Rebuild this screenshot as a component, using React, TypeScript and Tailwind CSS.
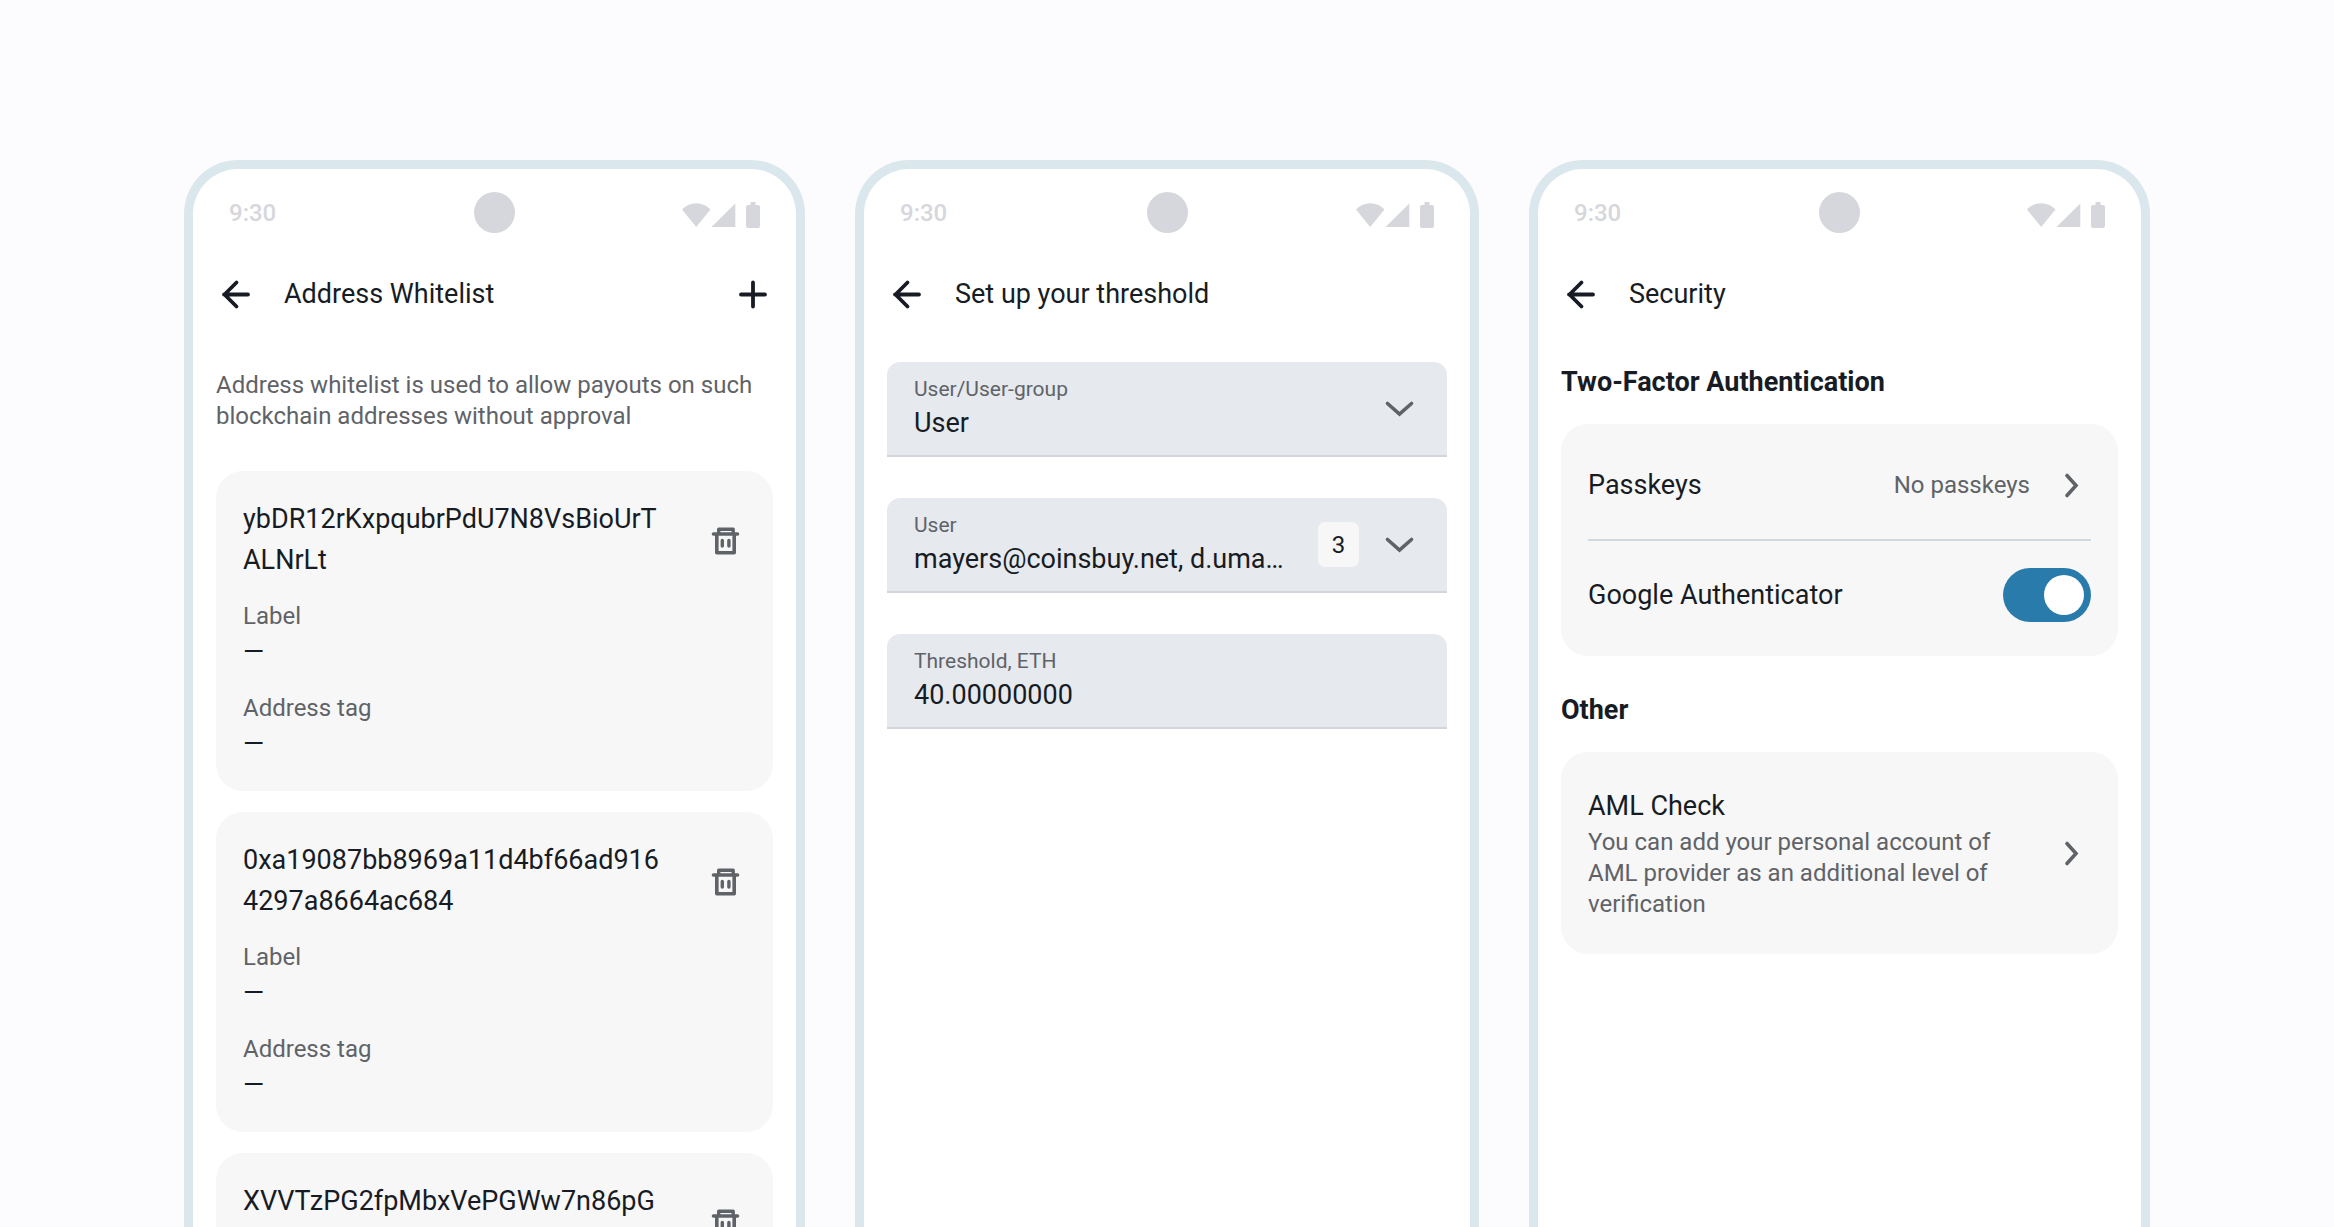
import { useState } from "react";

const addresses = [
  "ybDR12rKxpqubrPdU7N8VsBioUrTALNrLt",
  "0xa19087bb8969a11d4bf66ad9164297a8664ac684",
  "XVVTzPG2fpMbxVePGWw7n86pGWkR4tQz",
];

const StatusBar = () => (
  <div className="grid h-[87px] grid-cols-3 items-center px-[36px] text-[24px] font-medium text-[#d6d7dc]">
    <span>9:30</span>
    <span className="size-[41px] justify-self-center rounded-full bg-[#d6d7dc]" />
    <svg className="mt-1 h-[26px] w-[78px] justify-self-end" viewBox="0 0 78 26" fill="currentColor" aria-hidden="true">
      <path d="M0 7.500C8-1 20.500-1 28.500 7.500L14.200 25Z" />
      <path d="M53.300 1.500V25H29.500Z" />
      <path d="M68.500 0h5v3H76a2 2 0 0 1 2 2V24A2 2 0 0 1 76 26H66a2 2 0 0 1-2-2V5A2 2 0 0 1 66 3h2.500Z" />
    </svg>
  </div>
);

const Chevron = () => (
  <svg
    className="pointer-events-none size-[41px] shrink-0 text-[#5f6368]"
    viewBox="0 0 41 41"
    fill="none"
    stroke="currentColor"
    strokeWidth="3.6"
    strokeLinecap="round"
    aria-hidden="true"
  >
    <path d="M8.500 15.500 20.500 26 32.500 15.500" />
  </svg>
);

const ChevronRight = () => (
  <svg
    className="size-[41px] shrink-0 text-[#5f6368]"
    viewBox="0 0 41 41"
    fill="none"
    stroke="currentColor"
    strokeWidth="3.6"
    strokeLinecap="round"
    aria-hidden="true"
  >
    <path d="M17 10.500 26 20.500 17 30.500" />
  </svg>
);

const TrashIcon = () => (
  <svg className="size-[41px]" viewBox="0 0 41 41" fill="none" stroke="currentColor" aria-hidden="true">
    <path d="M8.500 14H32.500" strokeWidth="3.600" strokeLinecap="round" />
    <path d="M13.700 13V9.200H28.200V13" strokeWidth="3.400" strokeLinejoin="round" />
    <path d="M11.800 14V32.700H29.200V14" strokeWidth="3.600" strokeLinejoin="round" />
    <path d="M17.300 20.500V26M23.900 20.500V26" strokeWidth="3.400" strokeLinecap="round" />
  </svg>
);

const Phone = ({ title, canAdd, children }: { title: string; canAdd?: boolean; children: React.ReactNode }) => (
  <section className="min-w-0 overflow-hidden rounded-t-[54px] border-[9px] border-b-0 border-[#dae8ed] bg-white">
    <StatusBar />
    <header className="flex h-[76px] items-center px-[23px]">
      <button type="button" aria-label="Back" className="size-[41px]">
        <svg
          className="size-[41px]"
          viewBox="0 0 41 41"
          fill="none"
          stroke="currentColor"
          strokeWidth="3.8"
          strokeLinecap="round"
          strokeLinejoin="round"
          aria-hidden="true"
        >
          <path d="M32 20.500H8M20.500 8.500 8.500 20.500 20.500 32.500" />
        </svg>
      </button>
      <h1 className="ml-[27px] flex-1 text-[27px] leading-[41px]">{title}</h1>
      {canAdd && (
        <button type="button" aria-label="Add address" className="size-[41px]">
          <svg
            className="size-[41px]"
            viewBox="0 0 41 41"
            fill="none"
            stroke="currentColor"
            strokeWidth="3.8"
            strokeLinecap="round"
            aria-hidden="true"
          >
            <path d="M9 20.500H33M21 8.500V32.500" />
          </svg>
        </button>
      )}
    </header>
    <div className="px-[23px] pt-[30px]">{children}</div>
  </section>
);

const AddressCard = ({ address }: { address: string }) => (
  <li className="rounded-[27px] bg-[#f7f7f7] px-[27px] pb-[26px] pt-[28px]">
    <div className="flex items-center gap-[41px]">
      <p className="min-w-0 flex-1 break-all text-[27px] leading-[41px]">{address}</p>
      <button type="button" aria-label="Delete address" className="size-[41px] shrink-0 text-[#5f6368]">
        <TrashIcon />
      </button>
    </div>
    <dl>
      {["Label", "Address tag"].map((name) => (
        <div key={name} className="mt-5">
          <dt className="text-[24px] leading-[31px] text-[#5f6368]">{name}</dt>
          <dd className="text-[27px] leading-[41px]">—</dd>
        </div>
      ))}
    </dl>
  </li>
);

const fieldClass = "flex h-[95px] items-center rounded-t-[13px] border-b-2 border-[#d3d5da] bg-[#e6e9ee] px-[27px]";
const labelClass = "block text-[21px] leading-[27px] text-[#5f6368]";
const valueClass = "block w-full appearance-none truncate bg-transparent text-[27px] leading-[41px] outline-none";

export default function App() {
  const [authenticator, setAuthenticator] = useState(true);
  const [threshold, setThreshold] = useState("40.00000000");

  return (
    <main className="grid h-screen grid-cols-[621fr_624fr_621fr] gap-[50px] overflow-hidden bg-[#fcfcfe] px-[184px] pt-40 font-[Roboto,sans-serif] text-[#171c24]">
      <Phone title="Address Whitelist" canAdd>
        <p className="mb-[39px] mt-2 text-[24px] leading-[31px] text-[#5f6368]">
          Address whitelist is used to allow payouts on such blockchain addresses without approval
        </p>
        <ul className="flex flex-col gap-[21px]">
          {addresses.map((address) => (
            <AddressCard key={address} address={address} />
          ))}
        </ul>
      </Phone>

      <Phone title="Set up your threshold">
        <form className="flex flex-col gap-[41px]">
          <div className={fieldClass}>
            <div className="min-w-0 flex-1 pt-0.5">
              <label htmlFor="user-group" className={labelClass}>User/User-group</label>
              <select id="user-group" className={valueClass}>
                <option>User</option>
              </select>
            </div>
            <Chevron />
          </div>
          <div className={fieldClass}>
            <div className="min-w-0 flex-1 pt-0.5">
              <label htmlFor="user" className={labelClass}>User</label>
              <select id="user" className={valueClass}>
                <option>mayers@coinsbuy.net, d.uma…</option>
              </select>
            </div>
            <span className="mx-5 flex h-[45px] w-[41px] items-center justify-center rounded-[7px] bg-[#f7f7f7] text-[24px]">
              3
            </span>
            <Chevron />
          </div>
          <div className={fieldClass}>
            <div className="min-w-0 flex-1 pt-0.5">
              <label htmlFor="threshold" className={labelClass}>Threshold, ETH</label>
              <input
                id="threshold"
                className={valueClass}
                value={threshold}
                onChange={(e) => setThreshold(e.target.value)}
              />
            </div>
          </div>
        </form>
      </Phone>

      <Phone title="Security">
        <h2 className="text-[27px] font-bold leading-[41px]">Two-Factor Authentication</h2>
        <div className="mt-[21px] rounded-[27px] bg-[#f7f7f7] px-[27px] py-[34px]">
          <button type="button" className="flex h-[54px] w-full items-center text-left">
            <span className="flex-1 text-[27px] leading-[41px]">Passkeys</span>
            <span className="mr-5 text-[24px] leading-[31px] text-[#5f6368]">No passkeys</span>
            <ChevronRight />
          </button>
          <hr className="my-[27px] border-t-2 border-[#d3d8dd]" />
          <label className="flex h-[54px] items-center justify-between text-[27px] leading-[41px]">
            Google Authenticator
            <input
              type="checkbox"
              role="switch"
              checked={authenticator}
              onChange={(e) => setAuthenticator(e.target.checked)}
              className="flex h-[54px] w-[88px] appearance-none items-center rounded-full bg-[#c4c9d0] px-[7px] before:size-[40px] before:rounded-full before:bg-white checked:justify-end checked:bg-[#297bab]"
            />
          </label>
        </div>
        <h2 className="mt-[34px] text-[27px] font-bold leading-[41px]">Other</h2>
        <button
          type="button"
          className="mt-[21px] flex w-full items-center rounded-[27px] bg-[#f7f7f7] px-[27px] py-[34px] text-left"
        >
          <span className="flex-1 pr-[34px]">
            <span className="block text-[27px] leading-[41px]">AML Check</span>
            <span className="block text-[24px] leading-[31px] text-[#5f6368]">
              You can add your personal account of AML provider as an additional level of verification
            </span>
          </span>
          <ChevronRight />
        </button>
      </Phone>
    </main>
  );
}
